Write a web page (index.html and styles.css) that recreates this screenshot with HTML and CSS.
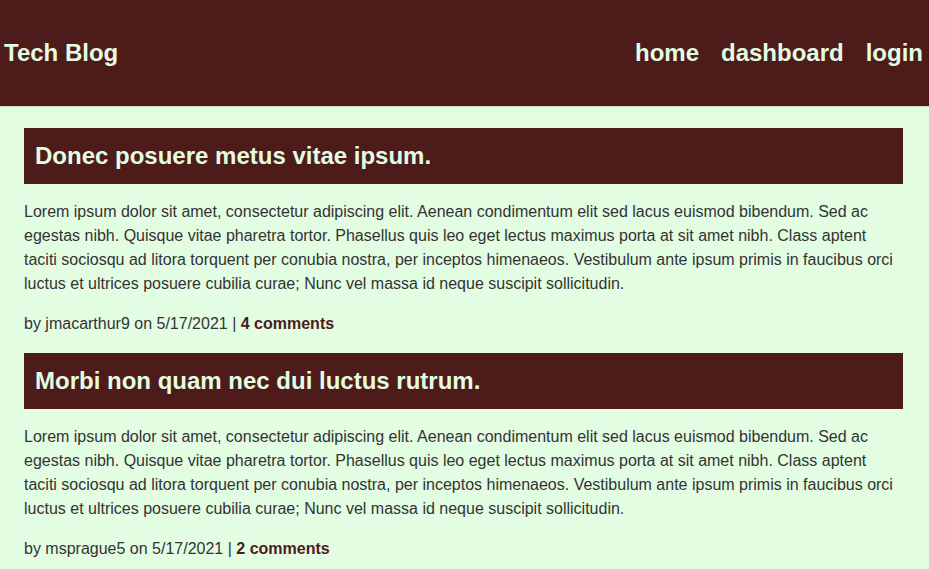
FILE: index.html
```html
<!DOCTYPE html>
<html lang="en">
<head>
<meta charset="utf-8">
<title>Tech Blog</title>
<link rel="stylesheet" href="styles.css">
</head>
<body>
<header class="site-header">
  <a class="brand" href="#">Tech Blog</a>
  <nav class="nav">
    <a href="#">home</a>
    <a href="#">dashboard</a>
    <a href="#">login</a>
  </nav>
</header>
<main class="posts">
  <article class="post">
    <h2 class="post-title">Donec posuere metus vitae ipsum.</h2>
    <p class="post-body">Lorem ipsum dolor sit amet, consectetur adipiscing elit. Aenean condimentum elit sed lacus euismod bibendum. Sed ac egestas nibh. Quisque vitae pharetra tortor. Phasellus quis leo eget lectus maximus porta at sit amet nibh. Class aptent taciti sociosqu ad litora torquent per conubia nostra, per inceptos himenaeos. Vestibulum ante ipsum primis in faucibus orci luctus et ultrices posuere cubilia curae; Nunc vel massa id neque suscipit sollicitudin.</p>
    <p class="post-meta">by jmacarthur9 on 5/17/2021 | <a href="#">4 comments</a></p>
  </article>
  <article class="post">
    <h2 class="post-title">Morbi non quam nec dui luctus rutrum.</h2>
    <p class="post-body">Lorem ipsum dolor sit amet, consectetur adipiscing elit. Aenean condimentum elit sed lacus euismod bibendum. Sed ac egestas nibh. Quisque vitae pharetra tortor. Phasellus quis leo eget lectus maximus porta at sit amet nibh. Class aptent taciti sociosqu ad litora torquent per conubia nostra, per inceptos himenaeos. Vestibulum ante ipsum primis in faucibus orci luctus et ultrices posuere cubilia curae; Nunc vel massa id neque suscipit sollicitudin.</p>
    <p class="post-meta">by msprague5 on 5/17/2021 | <a href="#">2 comments</a></p>
  </article>
</main>
</body>
</html>
```
FILE: styles.css
```css
* { box-sizing: border-box; }
html, body {
  margin: 0;
  padding: 0;
  background: #e3fde3;
  font-family: "Liberation Sans", Arial, Helvetica, sans-serif;
}
.site-header {
  height: 107px;
  background: #4e1b1b;
  border-bottom: 1px solid #c9dcc7;
  display: flex;
  align-items: center;
  justify-content: space-between;
  padding: 0 6px 0 4px;
}
.site-header a {
  color: #e3fde3;
  text-decoration: none;
  font-weight: bold;
  font-size: 24px;
}
.nav {
  display: flex;
  gap: 22px;
}
.posts {
  padding: 21px 26px 0 24px;
}
.post-title {
  margin: 0;
  background: #4e1b1b;
  color: #e3fde3;
  font-size: 24px;
  font-weight: bold;
  line-height: 28px;
  padding: 14px 11px;
}
.post-body {
  margin: 16px 0 0;
  color: #333;
  font-size: 16px;
  line-height: 24px;
}
.post-meta {
  margin: 16px 0 17px;
  color: #333;
  font-size: 16px;
  line-height: 24px;
}
.post-meta a {
  color: #4e1b1b;
  font-weight: bold;
  text-decoration: none;
}
```
